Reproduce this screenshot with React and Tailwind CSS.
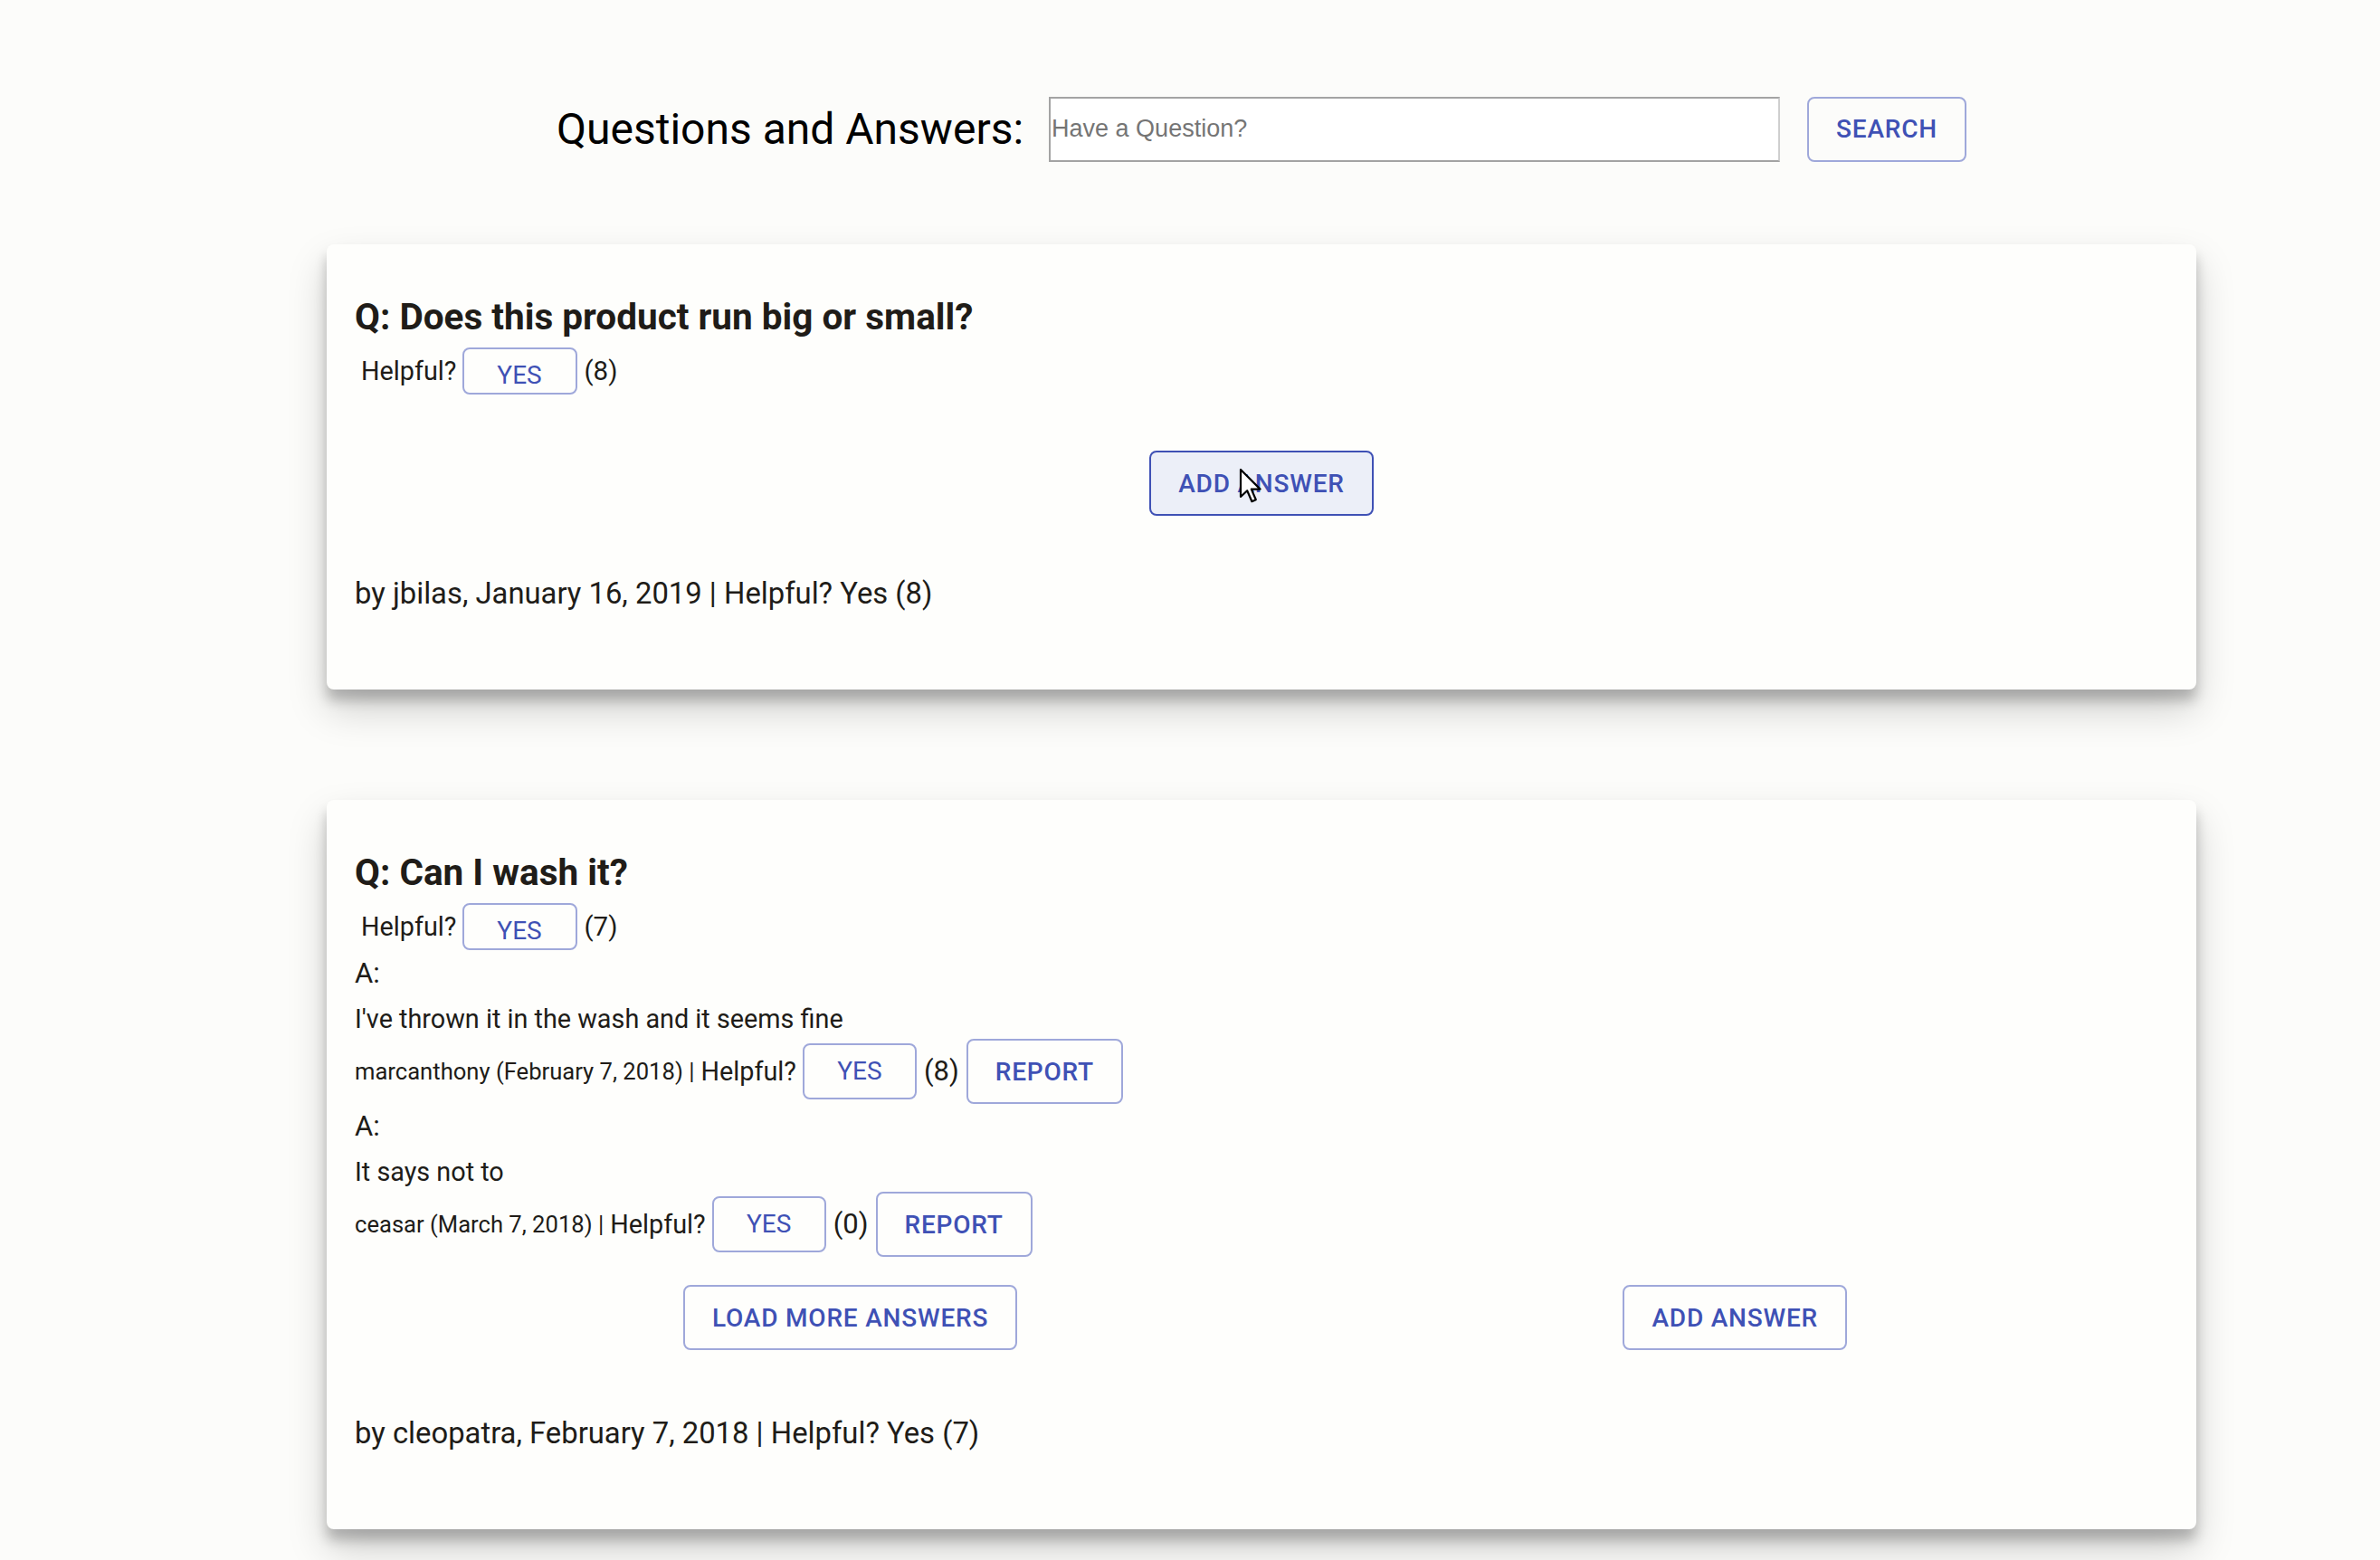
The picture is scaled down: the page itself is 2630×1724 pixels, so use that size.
import React from 'react';

const questions = [
  {
    id: 1,
    body: 'Does this product run big or small?',
    helpful: 8,
    asker: 'jbilas',
    date: 'January 16, 2019',
    answers: [],
  },
  {
    id: 2,
    body: 'Can I wash it?',
    helpful: 7,
    asker: 'cleopatra',
    date: 'February 7, 2018',
    answers: [
      { id: 1, body: "I've thrown it in the wash and it seems fine", user: 'marcanthony', date: 'February 7, 2018', helpful: 8 },
      { id: 2, body: 'It says not to', user: 'ceasar', date: 'March 7, 2018', helpful: 0 },
    ],
  },
];

function Cursor() {
  return (
    <svg
      className="pointer-events-none absolute left-[97px] top-[17px]"
      width="26"
      height="40"
      viewBox="0 0 13 20"
    >
      <path
        d="M1 1 L1 16 L4.6 12.6 L7.2 18.6 L9.4 17.6 L6.9 11.8 L11.8 11.8 Z"
        fill="#ffffff"
        stroke="#000000"
        strokeWidth="1.1"
        strokeLinejoin="round"
      />
    </svg>
  );
}

function ActionButton({ children, hovered = false }) {
  return (
    <button
      className={`relative box-border flex h-[72px] items-center justify-center rounded-[8px] border-2 px-[30px] text-[28px] font-medium uppercase leading-[49px] tracking-[0.8px] text-[#3f51b5] ${
        hovered ? 'border-[#3f51b5] bg-[#eceff8]' : 'border-[#9fa8da] bg-transparent'
      }`}
    >
      {children}
      {hovered && <Cursor />}
    </button>
  );
}

function QuestionCard({ q, hovered }) {
  const hasAnswers = q.answers.length > 0;
  return (
    <div className="flex flex-col rounded-[8px] bg-[#fefefc] px-[31px] pb-[82px] pt-[56px] shadow-[0_22px_44px_rgba(0,0,0,0.18),0_12px_14px_rgba(0,0,0,0.22)]">
      <h3 className="h-[48px] text-[40.5px] font-bold leading-[48px]">Q: {q.body}</h3>

      <div className="ml-[7px] mt-[10px] flex h-[52px] items-center">
        <span className="text-[28.8px] leading-[34px]">Helpful?</span>
        <button className="ml-[6px] box-border flex h-[52px] w-[127px] items-center justify-center rounded-[8px] border-2 border-[#9fa8da] pt-[9px] text-[28px] leading-[34px] text-[#3f51b5]">
          YES
        </button>
        <span className="ml-[8px] text-[29.5px] leading-[34px]">({q.helpful})</span>
      </div>

      {q.answers.map((a) => (
        <div key={a.id} className="flex flex-col">
          <div className="flex h-[52px] items-center text-[31px] leading-[36px]">A:</div>
          <div className="flex h-[47px] items-center text-[28.8px] leading-[36px]">{a.body}</div>
          <div className="flex h-[70px] items-center">
            <span className="text-[25.6px] leading-[32px]">
              {a.user} ({a.date}) |
            </span>
            <span className="ml-[7px] text-[28.8px] leading-[34px]">Helpful?</span>
            <button className="ml-[7px] box-border flex h-[62px] w-[126px] items-center justify-center rounded-[8px] border-2 border-[#9fa8da] text-[28px] leading-[34px] text-[#3f51b5]">
              YES
            </button>
            <span className="ml-[8px] text-[31px] leading-[36px]">({a.helpful})</span>
            <div className="ml-[8px]">
              <ActionButton>Report</ActionButton>
            </div>
          </div>
        </div>
      ))}

      {hasAnswers ? (
        <div className="mt-[32px] flex h-[72px] items-center justify-between pl-[363px] pr-[355px]">
          <ActionButton>Load More Answers</ActionButton>
          <ActionButton>Add Answer</ActionButton>
        </div>
      ) : (
        <div className="mt-[62px] flex h-[72px] items-center justify-center">
          <ActionButton hovered={hovered}>Add Answer</ActionButton>
        </div>
      )}

      <p className={`${hasAnswers ? 'mt-[68px]' : 'mt-[62px]'} h-[48px] text-[32.8px] leading-[48px]`}>
        by {q.asker}, {q.date} | Helpful? Yes ({q.helpful})
      </p>
    </div>
  );
}

export default function App() {
  return (
    <div className="min-h-screen bg-[#fcfcfa] font-['Roboto',sans-serif] text-[#201c18]">
      <div className="ml-[361px] w-[2066px] pb-[40px] pt-[106px]">
        <header className="flex h-[73px] items-center justify-center">
          <h1 className="text-[48px] font-normal leading-[58px] text-black">Questions and Answers:</h1>
          <input
            type="text"
            placeholder="Have a Question?"
            className="ml-[28px] box-border h-[72px] w-[808px] border-2 border-[#a3a3a3] border-r-[#cfcfcf] bg-white px-[1px] font-['Liberation_Sans',sans-serif] text-[27px] text-black placeholder:text-[#757575] focus:outline-none"
          />
          <div className="ml-[30px]">
            <ActionButton>Search</ActionButton>
          </div>
        </header>

        <div className="mt-[91px] flex flex-col gap-[122px]">
          {questions.map((q, i) => (
            <QuestionCard key={q.id} q={q} hovered={i === 0} />
          ))}
        </div>
      </div>
    </div>
  );
}
